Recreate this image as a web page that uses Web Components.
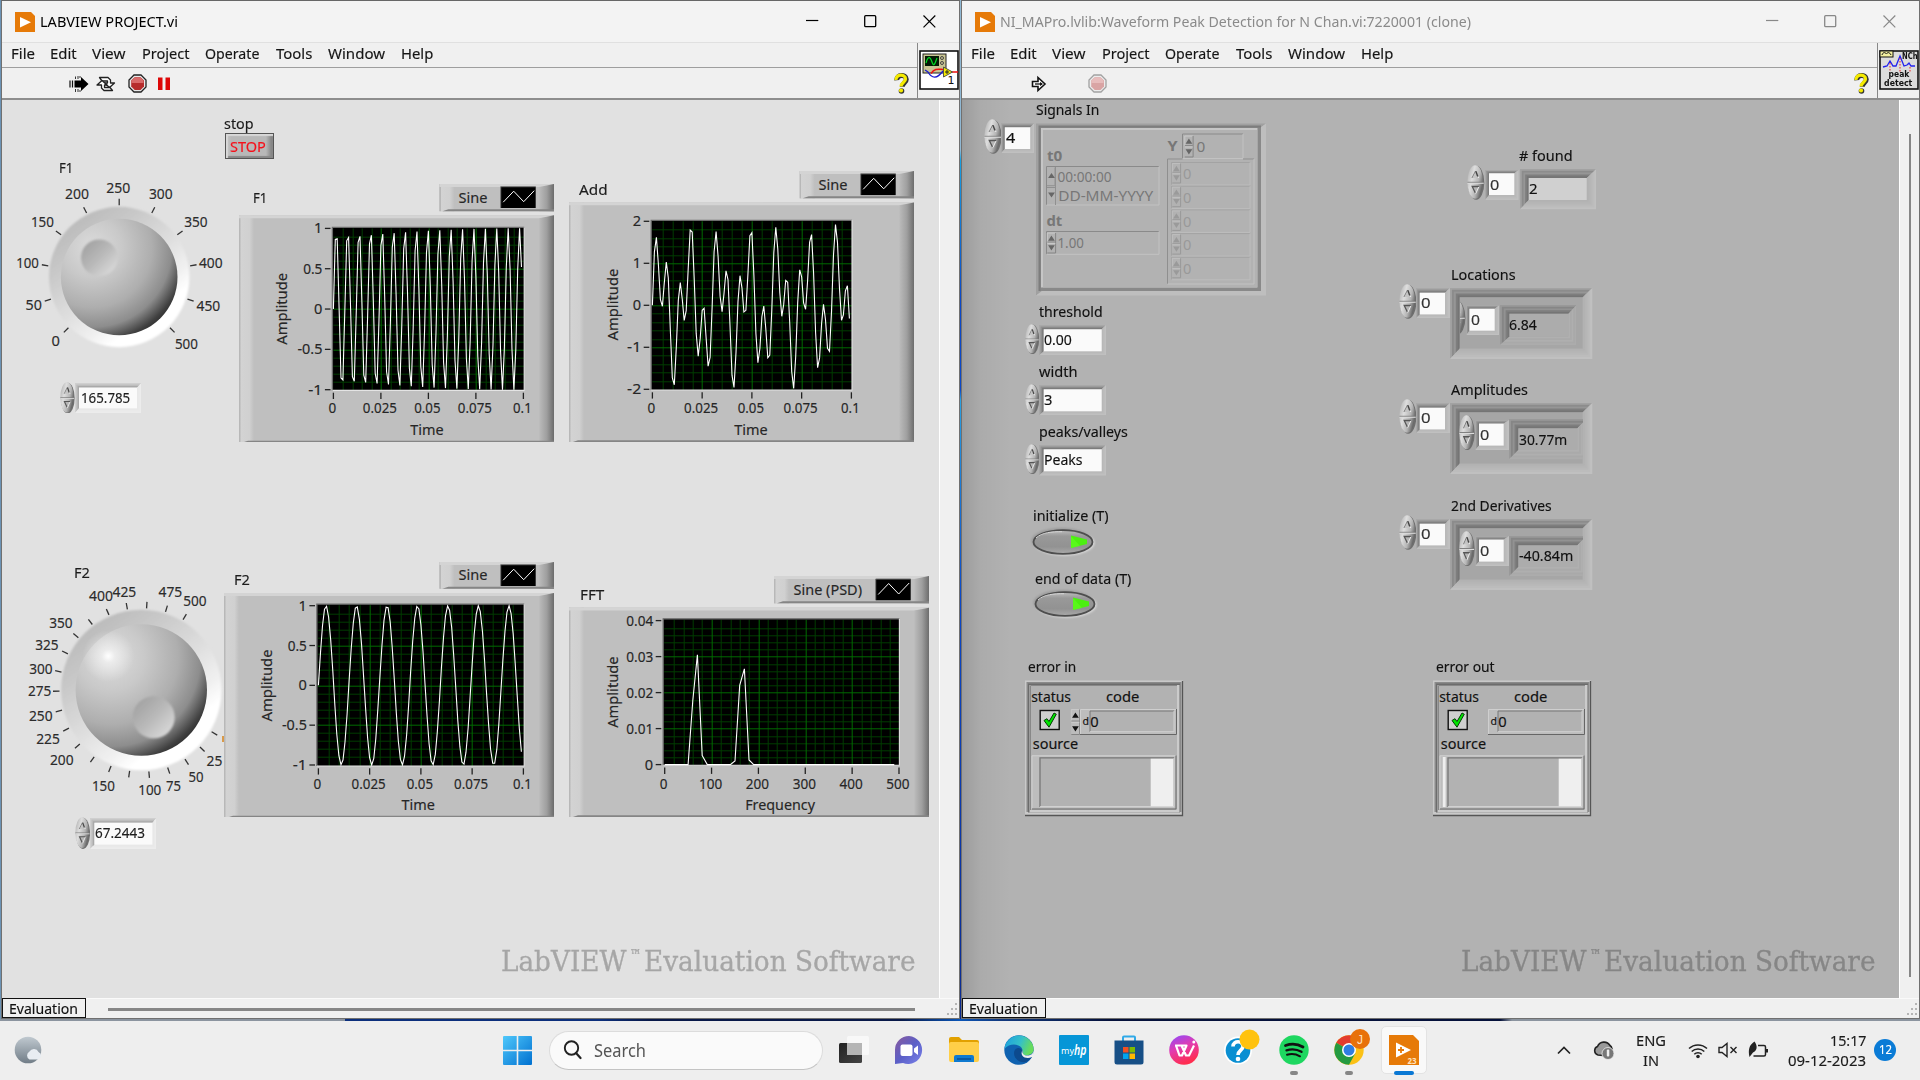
<!DOCTYPE html>
<html lang="en">
<head>
<meta charset="utf-8">
<title>LABVIEW PROJECT.vi</title>
<style>
html,body{margin:0;height:100%;overflow:hidden;background:#12307a}
body{font:15px/20px "Noto Sans","Open Sans",sans-serif;color:#111}
</style>
</head>
<body>
<lv-desktop></lv-desktop>
<script>
const def=(n,c)=>customElements.define(n,c);
class Base extends HTMLElement{
  connectedCallback(){ if(this.shadowRoot)return; this.attachShadow({mode:'open'}); this.shadowRoot.innerHTML=this.render(); this.ready&&this.ready(); }
  a(n,d){const v=this.getAttribute(n);return v===null?d:v}
  n(n){return parseFloat(this.getAttribute(n))}
}
/* Text fitted to a given advance width */
def('fit-text',class extends Base{
  render(){return `<style>:host{display:inline-block;white-space:pre;line-height:20px;height:20px;flex:none;-webkit-text-stroke:var(--tw,.15px) currentColor}span{display:inline-block;transform-origin:0 50%}</style><span><slot></slot></span>`}
  ready(){const s=this.shadowRoot.querySelector('span');const w=this.n('w');
    if(w){const o=s.getBoundingClientRect().width;if(o)s.style.transform=`scaleX(${w/o})`;this.style.width=w+'px';}}
});
const T=(s,x1,x2,b,style='')=>`<fit-text w="${(x2-x1+1.6).toFixed(1)}" style="position:absolute;left:${x1-1}px;top:${(b-16.4).toFixed(1)}px;${style}">${s}</fit-text>`;
const numW=s=>[...s].reduce((a,c)=>a+(c=='.'?3.1:c=='-'?5.8:7.75),0);
const ST=(s,x1,x2,b,extra='')=>`<text x="${x1-.8}" y="${b}" textLength="${x2-x1+1.4}" lengthAdjust="spacingAndGlyphs" ${extra}>${s}</text>`;

/* Oval increment / decrement buttons */
def('lv-spin',class extends Base{
  render(){return `<style>:host{display:block;position:absolute}svg{display:block;width:100%;height:100%}</style>
  <svg viewBox="0 0 18 35" preserveAspectRatio="none"><defs><linearGradient id="g" x1="0" x2="1" y1="0" y2=".5"><stop offset="0" stop-color="#a8a8a8"/><stop offset=".4" stop-color="#dedede"/><stop offset=".75" stop-color="#b5b5b5"/><stop offset="1" stop-color="#6a6a6a"/></linearGradient></defs>
  <ellipse cx="9.3" cy="17.7" rx="8.3" ry="17" fill="#6e6e6e"/><ellipse cx="8.4" cy="17" rx="8" ry="16.8" fill="url(#g)"/>
  <path d="M.5 17.3H17" stroke="#808080" stroke-width="1"/><path d="M.5 18.3H17" stroke="#dcdcdc" stroke-width="1"/>
  <path d="M5 13 8.7 6.5 12 13" fill="#c4c4c4" stroke="#eee"/><path d="M5 13 8.7 6" fill="none" stroke="#777"/><path d="M9 6.2 11 11.5" stroke="#444" stroke-width="1.5"/>
  <path d="M5.3 21.5H12L8.7 28.5Z" fill="#b5b5b5"/><path d="M12 21.5H5.3L8.5 28" fill="none" stroke="#555" stroke-width="1.3"/><path d="M12 22 8.9 28.5" stroke="#eee"/></svg>`}
});
const spin=(x1,y1,x2,y2)=>`<lv-spin style="left:${x1}px;top:${y1}px;width:${x2-x1}px;height:${y2-y1}px"></lv-spin>`;

/* Recessed field: outer box + inner well, mitred shading between the two */
def('lv-field',class extends Base{
  render(){
    const [x1,y1,x2,y2]=this.a('o').split(',').map(Number),[a,b,c,d]=this.a('i').split(',').map(Number);
    this.style.cssText+=`;left:${x1}px;top:${y1}px;width:${x2-x1}px;height:${y2-y1}px`;
    const cols=(this.a('shade','#a8a8a8,#909090,#7c7c7c;#c0c0c0,#bcbcbc,#b8b8b8')).split(';').map(v=>v.split(','));
    const N=cols[0].length;let s='';
    for(let k=0;k<N;k++){const f=k/N,L=x1+(a-x1)*f,Tt=y1+(b-y1)*f,R=x2-(x2-c)*f,B=y2-(y2-d)*f;
      s+=`<path d="M${L} ${B}V${Tt}H${R}L${c} ${b}L${a} ${b}L${a} ${d}Z" fill="${cols[0][k]}"/><path d="M${L} ${B}H${R}V${Tt}L${c} ${b}V${d}H${a}Z" fill="${cols[1][k]}"/>`;}
    return `<style>:host{display:block;position:absolute}svg{display:block}</style><svg width="${x2-x1}" height="${y2-y1}" viewBox="${x1} ${y1} ${x2-x1} ${y2-y1}">${s}<rect x="${a}" y="${b}" width="${c-a}" height="${d-b}" fill="${this.a('fill','#fafafa')}"/></svg>`}
});
const field=(o,i,fill,shade)=>`<lv-field o="${o}" i="${i}" ${fill?`fill="${fill}"`:''} ${shade?`shade="${shade}"`:''}></lv-field>`;
const LIGHT='#cfcfcf,#bdbdbd,#a9a9a9;#ececec,#eaeaea,#e8e8e8';
const DEEP='#a2a2a2,#8c8c8c,#969696,#7e7e7e,#757575;#c0c0c0,#bcbcbc,#b8b8b8,#b5b5b5,#b2b2b2';
const DEEP2='#999,#868686,#929292,#7e7e7e,#757575;#acacac,#a9a9a9,#afafaf,#aaa,#b0b0b0';

/* Rotary knob */
def('lv-knob',class extends Base{
  render(){
    const cx=this.n('cx'),cy=this.n('cy'),R=this.n('ro'),r=this.n('ri'),a0=this.n('a0'),cnt=this.n('ticks'),x0=this.n('x0'),x1=this.n('x1'),y0=cy-125,h=250;
    this.style.cssText+=`;left:${x0}px;top:${y0}px;width:${x1-x0}px;height:${h}px`;
    let t='';
    for(let i=0;i<=cnt;i++){const an=(a0+270*i/cnt)*Math.PI/180,s=Math.sin(an),c=-Math.cos(an);
      t+=`<path d="M${cx+s*(R+.8)} ${cy+c*(R+.8)}L${cx+s*(R+7.3)} ${cy+c*(R+7.3)}"/>`}
    const l=this.a('labels').split(';').map(v=>{const p=v.split(',');return ST(p[0],+p[1],+p[2],+p[3])}).join('');
    const [dx,dy,dr]=this.a('dimple').split(',').map(Number);
    const hl=this.hasAttribute('glow')?`<circle cx="${cx-33}" cy="${cy-34}" r="26" fill="url(#w)"/>`:'';
    return `<style>:host{display:block;position:absolute;color:#2b2b2b}svg{display:block}text{font-size:14.5px;fill:currentColor;stroke:currentColor;stroke-width:.15px}</style>
    <svg width="${x1-x0}" height="${h}" viewBox="${x0} ${y0} ${x1-x0} ${h}"><defs>
    <linearGradient id="o" x1=".2" y1=".1" x2=".8" y2=".9"><stop offset="0" stop-color="#bcbcbc"/><stop offset=".2" stop-color="#c8c8c8"/><stop offset=".5" stop-color="#dedede"/><stop offset=".72" stop-color="#f0f0f0"/><stop offset=".85" stop-color="#fff"/></linearGradient>
    <radialGradient id="k" cx=".27" cy=".25" r=".85" ><stop offset="0" stop-color="#dcdcdc"/><stop offset=".3" stop-color="#c9c9c9"/><stop offset=".6" stop-color="#aeaeae"/><stop offset=".8" stop-color="#8d8d8d"/><stop offset=".95" stop-color="#404040"/><stop offset="1" stop-color="#303030"/></radialGradient>
    <linearGradient id="d" x1=".15" y1=".15" x2=".85" y2=".85"><stop offset="0" stop-color="#a4a4a4"/><stop offset=".5" stop-color="#b9b9b9"/><stop offset="1" stop-color="#d6d6d6"/></linearGradient>
    <radialGradient id="w"><stop offset="0" stop-color="#fff"/><stop offset=".25" stop-color="#fff" stop-opacity=".5"/><stop offset="1" stop-color="#fff" stop-opacity="0"/></radialGradient>
    <filter id="b" x="-10%" y="-10%" width="120%" height="120%"><feGaussianBlur stdDeviation="1.2"/></filter></defs>
    <circle cx="${cx}" cy="${cy}" r="${R-.8}" fill="url(#o)" filter="url(#b)"/>
    <circle cx="${cx}" cy="${cy}" r="${r}" fill="url(#k)"/>${hl}
    <circle cx="${dx}" cy="${dy}" r="${dr}" fill="url(#d)" filter="url(#b)"/>
    <g stroke="#333" stroke-width="1.3">${t}</g>${l}</svg>`}
});

/* Waveform graph with plot legend */
def('lv-graph',class extends Base{
  render(){
    const c=JSON.parse(this.a('cfg'));
    const [fx,fy,fr,fb]=c.frame,[px,py,pr,pb]=c.plot,[ax,ay,ar,ab]=c.axis,[lx,ly,lr,lb]=c.legend;
    this.style.cssText+=`;left:${fx}px;top:${ly}px;width:${fr-fx}px;height:${fb-ly}px`;
    const X=v=>ax+(v-c.xr[0])/(c.xr[1]-c.xr[0])*(ar-ax),Y=v=>ab-(v-c.yr[0])/(c.yr[1]-c.yr[0])*(ab-ay);
    const box=(x,y,r,b)=>`<rect x="${x}" y="${y}" width="${r-x}" height="${b-y}" fill="#bfbfbf"/>
      <rect x="${x}" y="${y}" width="15" height="${b-y}" fill="url(#l)"/><path d="M${x} ${y}H${r}L${r-9} ${y+3}H${x}Z" fill="#d4d4d4"/>
      <path d="M${r-15} ${b}V${y+3}L${r} ${y}V${b}Z" fill="url(#r)"/><path d="M${x+3} ${b}L${x+9} ${b-2}H${r}V${b}Z" fill="#858585"/>`;
    let g='';const xm=c.xt.length-1,ym=c.yt.length-1;
    for(let i=0;i<=xm*5;i++)if(i%5){const x=Math.round(ax+(ar-ax)*i/(xm*5))+.5;g+=`<path d="M${x} ${py+1}V${pb}" stroke="#003c00"/>`}
    for(let i=0;i<=ym*5;i++)if(i%5){const y=Math.round(ay+(ab-ay)*i/(ym*5))+.5;g+=`<path d="M${px+1} ${y}H${pr}" stroke="#003c00"/>`}
    for(let i=1;i<xm;i++){const x=Math.round(ax+(ar-ax)*i/xm)+.5;g+=`<path d="M${x} ${py+1}V${pb}" stroke="#006a00"/>`}
    for(let i=1;i<ym;i++){const y=Math.round(ay+(ab-ay)*i/ym)+.5;g+=`<path d="M${px+1} ${y}H${pr}" stroke="#006a00"/>`}
    let tk='',lab='';
    c.xt.forEach((s,i)=>{const x=ax+(ar-ax)*i/xm,w=numW(s);tk+=`<path d="M${x} ${pb+2.3}v6.3"/>`;lab+=ST(s,x-w/2-.2,x+w/2-1.6,c.xb)});
    c.yt.forEach((s,i)=>{const y=ay+(ab-ay)*i/ym,w=numW(s);tk+=`<path d="M${px-7.5} ${y}h5.6"/>`;lab+=ST(s,px-10.6-w+.8,px-10.6,y+5)});
    let pts=[];
    if(c.pts)pts=c.pts; else for(let i=0;i<100;i++){const t=i/1000;let v=0;for(const f of c.f)v+=Math.sin(2*Math.PI*f*t);pts.push([t,v])}
    const d=pts.map(p=>X(p[0]).toFixed(1)+','+Y(p[1]).toFixed(1)).join(' ');
    const [ix,iy]=c.icon;
    return `<style>:host{display:block;position:absolute}svg{display:block}text{font-size:14.5px;fill:#262626;stroke:#262626;stroke-width:.15px}</style>
    <svg width="${fr-fx}" height="${fb-ly}" viewBox="${fx} ${ly} ${fr-fx} ${fb-ly}"><defs>
    <linearGradient id="l"><stop offset="0" stop-color="#b8b8b8"/><stop offset=".08" stop-color="#b8b8b8"/><stop offset=".12" stop-color="#d3d3d3"/><stop offset=".7" stop-color="#d0d0d0"/><stop offset="1" stop-color="#bfbfbf"/></linearGradient>
    <linearGradient id="r"><stop offset="0" stop-color="#bbb"/><stop offset=".5" stop-color="#9f9f9f"/><stop offset="1" stop-color="#6a6a6a"/></linearGradient>
    <clipPath id="c"><rect x="${px}" y="${py}" width="${pr-px}" height="${pb-py+.6}"/></clipPath></defs>
    ${box(fx,fy,fr,fb)}${box(lx,ly,lr,lb)}
    ${ST(c.name,c.nt[0],c.nt[1],c.nt[2])}
    <rect x="${ix}" y="${iy}" width="35" height="21.3" fill="#000"/><path d="M${ix} ${iy+21}V${iy}H${ix+35}" fill="none" stroke="#777"/><path d="M${ix+2.5} ${iy+15.5} ${ix+13} ${iy+4.5}l10 10.5 10.5-11" fill="none" stroke="#fff" stroke-width="1"/>
    <rect x="${px}" y="${py}" width="${pr-px}" height="${pb-py}" fill="#000"/><g>${g}</g>
    <path d="M${px} ${pb}V${py}H${pr}" fill="none" stroke="#6c6c6c" stroke-width="1.3"/><path d="M${px} ${pb}H${pr}V${py}" fill="none" stroke="#e4e4e4" stroke-width="1.1"/>
    <g clip-path="url(#c)"><polyline points="${d}" fill="none" stroke="#fff" stroke-width="1.1"/></g>
    <g stroke="#222" stroke-width="1.3">${tk}</g>${lab}
    ${ST(c.xn,c.xnt[0],c.xnt[1],c.xnt[2])}
    <g transform="translate(${c.an[0]} ${c.an[2]}) rotate(-90)">${ST('Amplitude',0,c.an[2]-c.an[1],0)}</g></svg>`}
});
const graph=o=>`<lv-graph cfg='${JSON.stringify(o)}'></lv-graph>`;

/* Oval boolean button */
def('lv-led',class extends Base{
  render(){return `<style>:host{display:block;position:absolute;width:66px;height:32px}svg{display:block}</style>
  <svg width="66" height="32"><defs><linearGradient id="g" x2="0" y2="1"><stop offset="0" stop-color="#bdbdbd"/><stop offset=".25" stop-color="#999"/><stop offset=".7" stop-color="#929292"/><stop offset="1" stop-color="#aaa"/></linearGradient><filter id="b" x="-20%" width="140%" y="-30%" height="160%"><feGaussianBlur stdDeviation="1.3"/></filter></defs>
  <ellipse cx="34.5" cy="17" rx="30" ry="12.5" fill="#dedede" filter="url(#b)"/><ellipse cx="31.5" cy="14.5" rx="30" ry="12.5" fill="#999" filter="url(#b)"/>
  <ellipse cx="33" cy="16" rx="29.5" ry="11.8" fill="url(#g)" stroke="#4e4e4e" stroke-width="1.8"/><path d="M6 12C12 6.500 22 5.500 32 5.700" fill="none" stroke="#d8d8d8" stroke-width="1"/>
  <path d="M41 9.500 57 13.500V18L41 22Z" fill="#4cf010"/><path d="M41 10v12L50 20Z" fill="#62ff22" opacity=".6"/></svg>`}
});

/* Classic flat up/down arrows */
const arrows=(x,y,h,col)=>`<g transform="translate(${x} ${y})"><path d="M0 ${h/2-.5}V0H8" stroke="#c9c9c9" fill="none"/><path d="M8.3 0V${h}H0" stroke="#858585" fill="none"/><path d="M0 ${h/2-1}H8" stroke="#8a8a8a"/><path d="M0 ${h/2+.5}H8" stroke="#c9c9c9"/><path d="M4.100 ${h*.12}L7.500 ${h*.12+5.300}H.8ZM4.100 ${h*.88}L7.500 ${h*.88-5.300}H.8Z" fill="${col}"/></g>`;
const sunk=(x1,y1,x2,y2,d='#8a8a8a',l='#c2c2c2')=>`<path d="M${x1} ${y2}V${y1}H${x2}" fill="none" stroke="${d}"/><path d="M${x1} ${y2}H${x2}V${y1}" fill="none" stroke="${l}"/>`;

/* Disabled waveform cluster */
def('lv-waveform',class extends Base{
  render(){let rows='';
    for(let i=0;i<5;i++){const y=162.5+i*23.7;rows+=sunk(211.5,y,290,y+22.5,'#a3a3a3','#bdbdbd')+`<g opacity=".55">${arrows(212.300,y+1,19.500,'#888')}</g>`}
    let z='';for(let i=0;i<5;i++)z+=ST('0',223.7,230.7,179.3+i*23.7,'style="fill:#999"');
    return `<style>:host{display:block;position:absolute;left:76px;top:123px;width:230px;height:173px}svg{display:block}text{font-size:14.5px;fill:#777}.b{font-weight:700}</style>
    <svg width="230" height="173" viewBox="76 123 230 173">
    <path d="M76 295.500V123.500H306Z" fill="#a0a0a0"/><path d="M76 295.500H306V123.500Z" fill="#bebebe"/>
    <rect x="78.500" y="125.500" width="222.500" height="165.500" fill="#7d7d7d"/><rect x="80.500" y="127.500" width="220.500" height="163.500" fill="#898989"/>
    <rect x="81" y="128" width="216.500" height="159.500" fill="#c6c6c6"/><rect x="83" y="130" width="214" height="157.500" fill="#b2b2b2"/>
    ${sunk(86.5,166.5,199,205)}<path d="M95.500 167v38M95 167.500v18M87 185.700H95.500M87 187.500h8" stroke="#909090"/><path d="M91.500 173l3.400 5h-6.800zM91.500 197.500l3.400-5h-6.800z" fill="#666"/>
    ${sunk(86.5,231.5,199,254.3)}${arrows(87.300,233,20,'#666')}
    ${sunk(222.5,134,283,158.5)}${arrows(224.800,136,21,'#666')}
    <path d="M207.500 284V159H222.500M283 159H294" fill="none" stroke="#8f8f8f"/><path d="M207.500 284H294V159" fill="none" stroke="#c2c2c2"/>${rows}
    ${ST('t0',87.7,101.7,161,'class="b"')}${ST('00:00:00',98.3,151,182)}${ST('DD-MM-YYYY',99,192.7,201)}${ST('dt',87.3,101.7,226.3,'class="b"')}${ST('1.00',98.3,123.3,248.3)}${ST('Y',208.3,217,151,'class="b"')}${ST('0',237.3,244.7,152.3)}${z}</svg>`}
});

/* Error cluster */
def('lv-error',class extends Base{
  render(){const inn=this.hasAttribute('in');
    return `<style>:host{display:block;position:absolute;top:680px;width:160px;height:137px}svg{display:block}text{font-size:14.5px;fill:#111;stroke:#111;stroke-width:.15px}</style>
    <svg width="160" height="137" viewBox="65 680 160 137"><rect x="65" y="680.500" width="158" height="135.500" fill="#c9c9c9"/><path d="M65 815.500H222.500V681" fill="none" stroke="#555" stroke-width="1.3"/>
    <rect x="66.500" y="682" width="155" height="130" fill="#8a8a8a"/><rect x="68" y="683.500" width="152" height="129" fill="#6c6c6c"/><rect x="69.500" y="685" width="150" height="127.500" fill="#cbcbcb"/><rect x="70.500" y="686" width="146.500" height="124" fill="#b2b2b2"/><path d="M70.500 810V685.500H217" fill="none" stroke="#888"/>
    <rect x="80.200" y="710.500" width="19" height="19" fill="#cfcfcf" stroke="#111" stroke-width="1.4"/><path d="M84 720.500l3-1.800 2 2.800 5-8.500 2.300 1.200-7.300 13z" fill="#00e400" stroke="#063c06"/>
    ${inn?`<rect x="111.200" y="709" width="8.500" height="26" fill="#bcbcbc"/>`+arrows(111.300,709.500,25,'#111'):''}
    <rect x="120.300" y="709" width="96.500" height="26" fill="#bdbdbd"/><path d="M120.500 735V709.500H217" fill="none" stroke="#cfcfcf"/><path d="M120 734.500H216.500V709" fill="none" stroke="#666"/>
    <rect x="130" y="711" width="84" height="21" fill="#b2b2b2"/>${sunk(130,711,214,731.7,'#777','#d0d0d0')}
    <rect x="71.600" y="755.300" width="144.400" height="54" fill="#bdbdbd"/><path d="M72 809V755.800H216" fill="none" stroke="#d0d0d0"/><path d="M72 809H216V755.500" fill="none" stroke="#686868"/>
    <rect x="79.500" y="757.300" width="135" height="49.500" fill="#b2b2b2"/><path d="M80 807V757.800H214" fill="none" stroke="#777" stroke-width="1.3"/><path d="M80 806.700H214V758" fill="none" stroke="#d8d8d8"/><rect x="190.700" y="758.700" width="22.500" height="47.500" fill="#efefef"/>
    ${inn?'':'<rect x="74.800" y="757" width="2.800" height="50" fill="#eee"/>'}
    ${ST('status',72,110.4,702.3)}${ST('code',146.8,178.8,702.3)}${ST('source',73.6,117.5,748.7)}${ST('d',123.4,128.500,724.5,'style="font-size:11px"')}${ST('0',131,138,726.7)}</svg>`}
});

/* Array index + nested element box */
def('lv-array',class extends Base{
  render(){const loc=this.hasAttribute('loc'),v=this.a('v'),v2=+this.a('vx');
    const inner=loc?`<div class="clip"><div class="org">${spin(487.500,300,505.300,335)}</div></div>`+field('505.3,304.3,539,335','508.7,308,534,330')+T('0',511.3,518.7,324.7,'color:#333')+field('539.3,304.3,616,344.3','548.7,313,607.7,336','#acacac',DEEP2)+T(v,549.7,v2,329.7)
      :spin(499,299.300,515,334.700)+field('515,304.7,549,335','519,308.3,543.7,330.3')+T('0',521,528.7,324.7,'color:#333')+`<div class="clip"><div class="org">${field('549,304,626.500,344.3','558.3,313.3,617.3,335','#acacac',DEEP2)}</div></div>`+T(v,560,v2,330);
    return `<style>:host{display:block;position:absolute;left:0;width:960px;height:0}.clip{position:absolute;left:500px;top:297px;width:122.500px;height:51px;overflow:hidden}.org{position:absolute;left:-500px;top:-297px}</style>
    ${T(this.a('name'),491.7,+this.a('nx'),280)}${spin(438.3,283.3,456,318.3)}${field('456,287.3,490,317.7','459.7,292,485,313.7')}${T('0',462,470,308,'color:#333')}
    ${field('490,287.7,632.3,358.7','499.7,297,622.7,348.3','#a6a6a6',DEEP)}${inner}`}
});

/* Toolbar glyphs */
def('lv-toolbar',class extends Base{
  render(){const idle=this.hasAttribute('idle');
    const svg=(w,h,b,ml=0,o=1)=>`<svg width="${w}" height="${h}" viewBox="0 0 ${w} ${h}" style="margin-left:${ml}px;opacity:${o}">${b}</svg>`;
    const stop=`<path d="M6 1H13L18 6V13L13 18H6L1 13V6Z" fill="#e8e8e8" stroke="#222" stroke-width="1.300"/><path d="M6.700 3.200H12.500L16 6.500V12.500L12.500 16H6.700L3.200 12.500V6.500Z" fill="#b62c2c"/><path d="M6.700 3.500H12.500L15.500 6.500V9H3.500V6.500Z" fill="#d96a6a"/>`;
    return `<style>:host{display:flex;align-items:center;height:32px;flex:none}svg{flex:none;display:block}.sp{flex:1}</style>
    ${idle?svg(16,18,'<path d="M1.500 6.500H7V2.500L14 9L7 15.500V11.500H1.500Z" fill="#fff" stroke="#111" stroke-width="1.600"/><path d="M4 9H11" stroke="#111" stroke-width="1.300"/><path d="M9 7v4l3-2z" fill="#111"/>',69):
      svg(20,18,'<path d="M5.500 5.500H12V2L19.500 9L12 16V12.500H5.500Z"/><path d="M1 5.500v7M3.500 5.500v7" stroke="#111" stroke-width="1.200"/><path d="M6.500 1.500v2.500M9 1v3M6.500 14v3M9 14v3M11 1v2M11 15v2" stroke="#333" stroke-width="1"/>',67)+
      svg(22,18,'<g fill="#fff" stroke="#222" stroke-width="1.300" stroke-linejoin="round"><path d="M4.500 2.500H13L15.500 5V8H19.500L14.500 12.500L9.500 8H12.500V6H7Z"/><path d="M17.500 15.500H9L6.500 13V10H2L7 5.500L12 10H9.500V12.500H15Z"/></g>',6)}
    ${svg(19,19,stop,idle?41.200:10.700,idle?.38:1)}
    ${idle?'':svg(12,14,'<path d="M0 .500h4.500v12.500H0zM7.500 .500H12v12.500H7.500z" fill="#dd0808"/>',11)}
    <span class="sp"></span>${svg(16,21,'<path d="M3 7C2.500 1 12.500 .500 12.500 6C12.500 9.500 8.500 9.500 8.500 13.500" fill="none" stroke="#333" stroke-width="5" transform="translate(.8 .3)"/><circle cx="8.500" cy="18" r="2.800" fill="#333"/><path d="M3 7C2.500 1 12.500 .500 12.500 6C12.500 9.500 8 9.500 8 13.500" fill="none" stroke="#f4ea00" stroke-width="3.300"/><circle cx="8" cy="17.500" r="2.100" fill="#f4ea00"/>')}<span style="width:8px"></span>`}
});

/* VI connector icons, 40 x 40 */
const viIcon1=`<rect x="1" y="1" width="38" height="38" fill="#fff" stroke="#111" stroke-width="1.600"/><rect x="4" y="4" width="23" height="19" fill="#c9c593" stroke="#222"/><rect x="6" y="6" width="14" height="10" fill="#041a04"/><path d="M7 13c2-7 4-7 6-1s3 1 5-4" fill="none" stroke="#0d2" stroke-width="1.200"/><circle cx="23" cy="8" r="1.500" fill="none" stroke="#444"/><circle cx="23" cy="13" r="1.500" fill="none" stroke="#444"/><path d="M6 20l3 2c4 7 9 7 15-1" fill="none" stroke="#1a1ad0" stroke-width="1.300"/><path d="M12 23.500c4-6 8-4 13-4M33 22h6" fill="none" stroke="#e11" stroke-width="1.500"/><path d="M24.500 17v10l9-5z" fill="#f4ea00" stroke="#554"/><path d="M26 22h4M28 20v4" stroke="#222"/>`;
const viIcon2=`<rect x="1" y="1" width="38" height="38" fill="#dcdcdc" stroke="#111" stroke-width="1.600"/><rect x="1" y="1" width="13" height="6" fill="#f3f0a0" stroke="#111"/><path d="M3 5c1-3 3-3 4.500-1 1-2 3-2 4.500 1" fill="none" stroke="#111"/><path d="M4 17l4-1 3-5 3 5h3l4-10 4 10 3-1 2-2 2 3h4" fill="none" stroke="#22e" stroke-width="1.300"/><path d="M11 13v9M21 8v14M31 17v5" stroke="#e22" stroke-dasharray="1.500 1.500"/>`;

/* A LabVIEW window */
def('lv-window',class extends Base{
  render(){const idle=this.hasAttribute('idle');const c=idle?'#888':'#000';
    const menu=[['File',11.3,33.3],['Edit',51,75.7],['View',93.3,124.7],['Project',142.7,188.3],['Operate',206.3,258.7],['Tools',276.7,311],['Window',329,384],['Help',401.7,432]];
    let cur=1.8,m='';for(const[s,a,b]of menu){m+=`<fit-text w="${(b-a+2).toFixed(1)}" style="margin-left:${(a-1-cur).toFixed(1)}px">${s}</fit-text>`;cur=b+1}
    return `<style>
    :host{display:flex;flex-direction:column;box-sizing:border-box;width:959px;height:1018.500px;border:1px solid #707070;border-top-color:#666;background:#f0f0f0;overflow:hidden;flex:none}
    .title{height:41px;flex:none;display:flex;align-items:center;background:#f3f3f3;border-bottom:1px solid #e0e0e0;color:${idle?'#8a8a8a':'#000'};--tw:0}
    .title>svg{flex:none;display:block}.sp{flex:1}
    .mid{display:flex;height:57px;flex:none;border-bottom:2px solid #8e8e8e;box-sizing:border-box}
    .l{flex:1;display:flex;flex-direction:column}.menu{height:23.500px;flex:none;display:flex;align-items:center;border-bottom:1px solid #9e9e9e;color:#151515}
    .menu fit-text{margin-top:-4.500px;font-size:14.500px}.icon{width:42px;border-left:1px solid #888;position:relative;display:flex;align-items:center;justify-content:center;box-sizing:border-box}
    .icon .g{position:relative;width:40px;height:40px;margin-top:-2px}.icon svg{display:block}
    .icon span{position:absolute;font:700 9.500px/10px "DejaVu Sans",sans-serif;text-align:center}
    .body{flex:1;display:flex;min-height:0}.panel{flex:1;position:relative;overflow:hidden;background:var(--panel)}
    .org{position:absolute;left:-1.600px;top:-99.800px;width:960px;height:1080px}
    .vs{width:20px;border-left:1px solid #fff;flex:none;display:flex;justify-content:center;box-sizing:border-box}
    .vs i{width:2px;margin-top:34px;margin-bottom:21px;background:#868686}
    .foot{height:19px;flex:none;display:flex;align-items:center;border-top:1px solid #fafafa}
    .tab{box-sizing:border-box;width:84px;height:20px;border:1.500px solid #111;padding-left:6px;color:#111;font-size:14.500px;line-height:18px;flex:none}
    .tab fit-text{margin-top:-1px}.hs{width:807px;height:2.300px;background:#868686;margin:3px 0 0 21.500px}</style>
    <div class="title"><svg width="20" height="20" style="margin-left:13px"><path d="M0 0H16L20 4V20H0Z" fill="#e67a08"/><path d="M5 5L16 10.300L5 15.500Z" fill="#fff"/></svg>
    <fit-text w="${this.a('tw')}" style="margin-left:4.500px;margin-top:-1px;font-size:15px">${this.a('name')}</fit-text><span class="sp"></span>
    <svg width="13" height="13"><path d="M0 5.500H12.300" stroke="${c}" stroke-width="1.200"/></svg><svg width="13" height="13" style="margin-left:45.300px"><rect x=".7" y=".7" width="11" height="11" rx="1" fill="none" stroke="${c}" stroke-width="1.300"/></svg><svg width="13" height="13" style="margin:0 23.500px 0 45.700px"><path d="M.5 .5L12.300 12.300M12.300 .5L.5 12.300" stroke="${c}" stroke-width="1.200"/></svg></div>
    <div class="mid"><div class="l"><div class="menu">${m}</div><lv-toolbar ${idle?'idle':''}></lv-toolbar></div><div class="icon"><div class="g"><svg width="40" height="40">${idle?viIcon2:viIcon1}</svg>${idle?'<span style="left:23px;top:1px;font-size:8.500px;transform:scaleX(.8);transform-origin:0 0">NCh</span><span style="left:7px;top:19px;transform:scaleX(.8)">peak</span><span style="left:2px;top:28.500px;transform:scaleX(.82)">detect</span>':'<span style="right:4px;top:26px;font-weight:400;font-size:11px">1</span>'}</div></div></div>
    <div class="body"><div class="panel"><div class="org"><slot></slot></div></div><div class="vs">${idle?'<i></i>':''}</div></div>
    <div class="foot"><div class="tab"><fit-text w="69">Evaluation</fit-text></div>${idle?'':'<div class="hs"></div>'}<span class="sp"></span><svg width="13" height="16"><g fill="#b5b5b5"><path d="M9 3h2v2H9zM9 8h2v2H9zM9 13h2v2H9zM5 8h2v2H5zM5 13h2v2H5zM1 13h2v2H1z"/></g></svg></div>`}
});

const wm=c=>{const st=`font:27.500px/20px 'DejaVu Serif Condensed','DejaVu Serif',serif;color:${c};--tw:.3px`;
  return `<fit-text w="125.500" style="position:absolute;left:500.500px;top:950.600px;${st}">LabVIEW</fit-text><fit-text w="11" style="position:absolute;left:629.500px;top:945px;${st};font-size:15px">™</fit-text><fit-text w="271.500" style="position:absolute;left:643.500px;top:950.600px;${st}">Evaluation Software</fit-text>`};

def('project-panel',class extends Base{
  render(){
    const xt=['0','0.025','0.05','0.075','0.1'],h=['1','0.5','0','-0.5','-1'];
    return `<style>:host{display:block;font-size:14.500px;color:#1c1c1c}.stop{position:absolute;left:224.300px;top:133px;width:49px;height:25.500px;box-sizing:border-box;border:1.500px solid #555;background:linear-gradient(90deg,#c4c4c4 0,#b8b8b8 12%,#b8b8b8 85%,#777 100%);box-shadow:inset 2px 2px 1px #d8d8d8,inset -2px -2px 1px #888}</style>
    ${T('stop',225,253,128.7)}<div class="stop"></div>${T('STOP',231,265.3,152,'color:#f5101a')}
    ${T('F1',60,72.7,173.6)}
    <lv-knob cx="119.200" cy="277" ro="71" ri="58.300" a0="225" ticks="10" x0="10" x1="235" dimple="99.3,257.7,18.3" labels="200,65.7,88.3,199.3;250,107,129.7,193;300,149.7,172,199.3;150,31.7,53.3,227;350,185,207,227;100,17,38.3,268;400,199.7,222,268;50,26.3,41.3,309.7;450,197.3,219.7,311;0,52.3,59.3,345.7;500,175.7,197.3,349.3"></lv-knob>
    ${spin(59.7,381.3,74.7,413)}${field('74.3,382.7,140.7,412.7','78.3,387.3,136.3,408','',LIGHT)}${T('165.785',81.7,129.3,403)}
    ${T('F2',75,89.3,578.3)}
    <lv-knob glow cx="141.300" cy="690" ro="81" ri="65.700" a0="120.700" ticks="20" x0="10" x1="235" dimple="153.7,717.3,21" labels="400,89.7,112.3,601;425,113.3,135.7,596.7;475,159.3,181.7,597.3;500,184,206,606;350,50,72,628.3;325,36,58,650;300,30,52,674;275,28.7,50.7,696;250,29.7,52,721;225,37,59.3,743.7;200,50.7,73,765;150,92.7,114.3,791.3;100,139,160.7,795;75,166.7,180.3,791.3;50,189.3,203,782.3;25,207.3,221.7,766"></lv-knob>
    <div style="position:absolute;left:222px;top:736px;width:1.500px;height:6px;background:#d99a4a"></div>
    ${spin(74.3,816.3,89.7,848.5)}${field('89.3,817.3,155.7,848.3','93.7,822,151.7,844','',LIGHT)}${T('67.2443',96,144.3,838.3)}
    ${T('F1',254,266.7,203)}${T('Add',580,607,194.7)}${T('F2',235,249.3,584.7)}${T('FFT',580.3,603,599.7)}
    ${graph({frame:[238.3,214.5,553.5,442],plot:[331.7,226.7,523.5,389.7],axis:[332.7,227.7,522.7,389],legend:[438.7,183.3,553.5,210.5],xr:[0,.1],yr:[-1,1],xt,yt:h,xb:412.7,f:[165.785],name:'Sine',nt:[458.7,486.3,202],icon:[500,186],xn:'Time',xnt:[410.3,442.3,434.7],an:[286.7,272.7,343.3]})}
    ${graph({frame:[568.3,202,913.7,442],plot:[650.5,220,851.3,389.7],axis:[651.7,221,850.7,389],legend:[799,170.7,913.7,198],xr:[0,.1],yr:[-2,2],xt,yt:['2','1','0','-1','-2'],xb:412.7,f:[165.785,67.2443],name:'Sine',nt:[818.7,846.3,189.7],icon:[860,173.5],xn:'Time',xnt:[734.3,766.3,434.7],an:[617,269,339.3]})}
    ${graph({frame:[223.3,592.3,553.5,817],plot:[316.2,603.5,523.5,765.3],axis:[317.7,605,522.7,764.3],legend:[438.7,561.3,553.5,588],xr:[0,.1],yr:[-1,1],xt,yt:h,xb:788.3,f:[67.2443],name:'Sine',nt:[458.7,486.3,579.7],icon:[500,564],xn:'Time',xnt:[401.7,433.7,809.7],an:[271.7,649.3,720]})}
    ${graph({frame:[568.3,607.3,928.7,817],plot:[662.5,618.5,898.7,765],axis:[664,620.3,898.3,764.3],legend:[773.3,575.7,928.7,603],xr:[0,500],yr:[0,.04],xt:['0','100','200','300','400','500'],yt:['0.04','0.03','0.02','0.01','0'],xb:788.3,pts:[[0,0],[50,0],[60,.0178],[69.7,.0305],[80,.0025],[91,0],[140,0],[150,.001],[160,.022],[170,.0266],[180,.0013],[190,0],[490,0]],name:'Sine (PSD)',nt:[793.7,860.7,594.7],icon:[875,578.7],xn:'Frequency',xnt:[745.3,813.7,810],an:[617.7,656.7,726.7]})}
    ${wm('#a6a6a6')}`}
});

def('peak-panel',class extends Base{
  render(){
    const ctl=(dy,name,nx,v,vx)=>T(name,79.7,nx,317.3+dy)+spin(65,323.3+dy,79.5,353.7+dy)+field(`78.3,${324.7+dy},145.3,${355.3+dy}`,`83,${329+dy},141,${351+dy}`)+T(v,84.7,vx,345.3+dy);
    return `<style>:host{display:block;font-size:14.500px;color:#111}.sh{position:absolute;left:1px;top:99px;width:50px;height:900px;background:linear-gradient(90deg,rgba(0,0,0,.13),rgba(0,0,0,.04) 40%,transparent)}</style><div class="sh"></div>
    ${T('Signals In',76.3,138,114.7)}${spin(23.2,118.3,41.2,153.3)}${field('40.5,122.7,74,153','44.3,127,69.7,148.7')}${T('4',47,54.7,143)}
    <lv-waveform></lv-waveform>
    ${ctl(0,'threshold',141.7,'0.00',111)}${ctl(60,'width',116.7,'3',91.5)}${ctl(120.3,'peaks/valleys',167,'Peaks',121.7)}
    ${T('initialize (T)',73.7,147.7,521.3)}<lv-led style="left:70px;top:525.500px"></lv-led>
    ${T('end of data (T)',75.3,170,583.7)}<lv-led style="left:71.300px;top:588px"></lv-led>
    ${T('# found',560,612,160.7)}${spin(507,164.7,524.7,199.7)}${field('524.7,169.7,558.3,200','528.7,173,554,194.7')}${T('0',531,538.7,189.7,'color:#333')}
    ${field('559.3,169,635.7,209.3','568,178,626,200','#d0d0d0',DEEP)}${T('2',570,577,194.3)}
    <lv-array loc name="Locations" nx="554.7" v="6.84" vx="576" style="top:0"></lv-array>
    <lv-array name="Amplitudes" nx="567" v="30.77m" vx="606.700" style="top:115px"></lv-array>
    <lv-array name="2nd Derivatives" nx="590.700" v="-40.84m" vx="612.700" style="top:231.300px"></lv-array>
    ${T('error in',68.9,115.5,672.3)}<lv-error in style="left:65px"></lv-error>
    ${T('error out',476.5,533.5,672.3)}<lv-error style="left:472.700px"></lv-error>
    ${wm('#868686')}`}
});

/* Windows taskbar */
def('task-bar',class extends Base{
  render(){
    const I=(b,run='')=>`<div class="c ${run}"><svg width="30" height="30" viewBox="0 0 30 30" overflow="visible">${b}</svg></div>`;
    return `<style>:host{display:flex;align-items:center;height:59.500px;background:#eee;box-sizing:border-box;color:#1b1b1b;flex:none}
    svg{display:block;flex:none}.c{width:55.050px;height:59px;display:flex;flex-direction:column;align-items:center;justify-content:center;position:relative;flex:none}
    .dot::after{content:"";position:absolute;bottom:5px;width:8px;height:4px;border-radius:2px;background:#868686}
    .on::before{content:"";position:absolute;left:4px;top:5px;width:46px;height:48px;background:#f9f9f9;border:1px solid #e3e3e3;border-radius:5px;box-sizing:border-box}
    .on svg{position:relative}.on::after{content:"";position:absolute;bottom:5px;width:20px;height:4px;border-radius:2px;background:#0a78d4}
    .search{width:274px;height:39px;box-sizing:border-box;border:1px solid #dcdcdc;border-bottom-color:#c4c4c4;border-radius:20px;background:#fafafa;display:flex;align-items:center;margin-left:16.500px;color:#555;flex:none}
    .col{display:flex;flex-direction:column;align-items:center;font-size:14.500px}.col.e{align-items:flex-end}.sp{flex:1}
    .n{width:22px;height:22px;border-radius:50%;background:#0a7bd6;color:#fff;display:flex;align-items:center;justify-content:center;font-size:12px;margin:0 24px 0 8px}</style>
    <svg width="30" height="28" style="margin-left:14px"><defs><linearGradient id="m" x2="0" y2="1"><stop offset="0" stop-color="#c0c9d0"/><stop offset="1" stop-color="#717d87"/></linearGradient></defs><circle cx="14" cy="14" r="13.300" fill="url(#m)"/><path d="M15.500 23.500a4.500 4.500 0 010-8 5 5 0 0 1 9 .5 4 4 0 0 1 0 7.500z" fill="#e8edf2"/></svg>
    <svg width="29" height="29" style="margin-left:459px"><defs><linearGradient id="wn" x2="1" y2="1"><stop offset="0" stop-color="#4fc8fb"/><stop offset="1" stop-color="#0070d0"/></linearGradient></defs><path d="M0 1q0-1 1-1H13.700V13.700H0ZM15.300 0H28q1 0 1 1V13.700H15.300ZM0 15.300H13.700V29H1q-1 0-1-1ZM15.300 15.300H29V28q0 1-1 1H15.300Z" fill="url(#wn)"/></svg>
    <div class="search"><svg width="19" height="20" style="margin-left:13px"><circle cx="8.500" cy="8" r="6.700" fill="none" stroke="#222" stroke-width="1.900"/><path d="M13 13l4.500 5" stroke="#222" stroke-width="2.200" stroke-linecap="round"/></svg><fit-text w="52" style="margin-left:12px;font-size:17.500px;--tw:0">Search</fit-text></div>
    <div style="width:4px;flex:none"></div>
    ${I('<defs><linearGradient id="tv" x2="1" y2="1"><stop offset="0" stop-color="#222"/><stop offset="1" stop-color="#444"/></linearGradient></defs><rect x="0" y="8" width="23" height="20" rx="1.500" fill="url(#tv)"/><rect x="8" y="1" width="22" height="19" rx="1.500" fill="#f8f8f8"/><path d="M8 8H23V20H8Z" fill="#b5b5b5"/>')}
    ${I('<defs><linearGradient id="ch" x2="1" y2="1"><stop offset="0" stop-color="#8a5a9c"/><stop offset=".5" stop-color="#5b5fc7"/><stop offset="1" stop-color="#7b83eb"/></linearGradient></defs><path d="M15 1A14 14 0 1 1 9 28L1 29V15A14 14 0 0 1 15 1Z" fill="url(#ch)"/><rect x="6.500" y="9.500" width="12" height="11.500" rx="2" fill="#fff"/><path d="M20 13.500l4-3v9.500l-4-3z" fill="#fff"/>')}
    ${I('<path d="M0 4q0-2 2-2H10l3 3H28q2 0 2 2V12H0Z" fill="#e2a100"/><rect x="0" y="7" width="30" height="20" rx="2" fill="#ffcf48"/><path d="M5 27V22q0-2 2-2H23q2 0 2 2V27Z" fill="#0f7ad0"/><path d="M8 24H22" stroke="#084f94" stroke-width="1.500"/>')}
    ${I('<defs><linearGradient id="e1" x2="1" y2=".3"><stop offset="0" stop-color="#1a9de0"/><stop offset=".6" stop-color="#35c0c8"/><stop offset="1" stop-color="#68dc5c"/></linearGradient></defs><circle cx="15" cy="15" r="14.700" fill="#0f62b0"/><path d="M.4 14A14.700 14.700 0 0 1 29.700 14C29.700 19 25 21 20 20 17 19 19 17.500 18.500 15 17.500 9 6 7 .4 14Z" fill="url(#e1)"/><path d="M19 17C17 11 10 12 10 18 10 25 17 28 22 27 25 25.500 27 23.500 28 21.500 24 23.500 17 22 19 17Z" fill="#0c4a8e"/><path d="M18.500 15C18 19 20 20.500 23 20.500 27 20.500 28.500 19 29.700 16V22H28C22 25 15 21 18.500 15Z" fill="#eee"/>')}
    ${I('<rect width="30" height="30" rx="1" fill="#0696d7"/><text x="2" y="18.500" font-size="9" fill="#fff" textLength="13" lengthAdjust="spacingAndGlyphs">my</text><text x="15" y="20" font-size="15" font-weight="600" font-style="italic" fill="#fff" textLength="12.500" lengthAdjust="spacingAndGlyphs">hp</text>')}
    ${I('<path d="M9 7V2.500q0-1 1-1H20q1 0 1 1V7" fill="none" stroke="#2fa9e8" stroke-width="2"/><path d="M.5 5.500H29.500V27q0 2.500-2.500 2.500H3Q.5 29.500.5 27Z" fill="#174f86"/><path d="M9 12h5.500v5.500H9z" fill="#f25022"/><path d="M15.500 12H21v5.500h-5.500z" fill="#7fba00"/><path d="M9 18.500h5.500V24H9z" fill="#00a4ef"/><path d="M15.500 18.500H21V24h-5.500z" fill="#ffb900"/>')}
    ${I('<defs><linearGradient id="wp" x2=".4" y2="1"><stop offset="0" stop-color="#8a4bff"/><stop offset=".5" stop-color="#e23bb0"/><stop offset="1" stop-color="#ff2d50"/></linearGradient></defs><circle cx="15" cy="15" r="14.800" fill="url(#wp)"/><path d="M6 10.500H17.500L13 20.500H10.500L7 10.500M12.500 10.500L17 20.500H20L25 10.500" fill="none" stroke="#fff" stroke-width="2.200" stroke-linejoin="round"/><circle cx="24.800" cy="7" r="1.500" fill="#fff"/>')}
    ${I('<circle cx="14" cy="15.500" r="14" fill="#fff"/><circle cx="14" cy="15.500" r="12.300" fill="#0a8fd2"/><path d="M9 11.500C9 5 19.500 5.500 19 11.500C18.700 15.500 14 15.500 14 20" fill="none" stroke="#fff" stroke-width="3.600"/><circle cx="14" cy="24" r="2.300" fill="#fff"/><circle cx="25.500" cy="4.500" r="10" fill="#ffc20e"/>')}
    ${I('<circle cx="15" cy="15" r="14.700" fill="#1ed760"/><g fill="none" stroke="#111" stroke-linecap="round"><path d="M6.500 10.500C12 8.500 19 9 24 12" stroke-width="2.800"/><path d="M7.500 15.300C12.500 13.700 18 14.200 22.500 16.800" stroke-width="2.300"/><path d="M8 19.800C12.500 18.500 17 19 21 21.300" stroke-width="2"/></g>','dot')}
    ${I('<circle cx="15" cy="15" r="14.700" fill="#fbc116"/><path d="M15 15L2.270 7.650A14.700 14.700 0 0 1 27.730 7.650Z" fill="#e33b2e"/><path d="M15 15L2.270 7.650A14.700 14.700 0 0 0 15 29.700L21.500 18Z" fill="#249a41"/><circle cx="15" cy="15" r="7" fill="#fff"/><circle cx="15" cy="15" r="5.500" fill="#2f7de1"/><circle cx="26" cy="4" r="10" fill="#e8710a"/><text x="23" y="8.500" font-size="12" font-family="Liberation Sans,sans-serif" fill="#ffe0c0">J</text>','dot')}
    ${I('<path d="M0 0H24L30 6V30H0Z" fill="#e67a08"/><path d="M7 7.500L22 15L7 22.500Z" fill="#fff"/><path d="M9 15h6M12 12v6" stroke="#e67a08" stroke-width="1.800"/><text x="18.500" y="28.500" font-size="8" font-weight="700" fill="#ffe2bd">23</text>','on')}
    <span class="sp"></span>
    <svg width="14" height="9"><path d="M1 7.500L7 1.500L13 7.500" fill="none" stroke="#222" stroke-width="1.700"/></svg>
    <svg width="22" height="20" style="margin-left:22px;margin-top:2px"><path d="M5 14a4.500 4.500 0 0 1-.5-8.500A7 7 0 0 1 17 4.500 4.500 4.500 0 0 1 18 11L10 14.500Z" fill="#999" stroke="#222" stroke-width="1.600"/><circle cx="15" cy="12.500" r="6" fill="#777" stroke="#eee" stroke-width=".8"/><rect x="13.800" y="8.500" width="2.500" height="7" rx="1" fill="#eee"/></svg>
    <div class="col" style="margin-left:21px"><fit-text w="30">ENG</fit-text><fit-text w="16">IN</fit-text></div>
    <svg width="20" height="17" style="margin-left:22px"><g fill="none" stroke="#222" stroke-width="1.500"><path d="M1 6.500A13 13 0 0 1 19 6.500"/><path d="M3.700 9.500A9 9 0 0 1 16.300 9.500"/><path d="M6.300 12.300A5.300 5.300 0 0 1 13.700 12.300"/></g><circle cx="10" cy="14.500" r="1.800" fill="#222"/></svg>
    <svg width="20" height="16" style="margin-left:10px"><path d="M1 5.500H4L9 1.500V14.500L4 10.500H1Z" fill="none" stroke="#222" stroke-width="1.400"/><path d="M12.500 5L18.500 11M18.500 5L12.500 11" stroke="#222" stroke-width="1.400"/></svg>
    <svg width="21" height="18" style="margin-left:10px"><path d="M10 4.500H16Q17.500 4.500 17.500 6V13.500Q17.500 15 16 15H5.500" fill="none" stroke="#222" stroke-width="1.500"/><path d="M19 8v3.500" stroke="#222" stroke-width="2"/><path d="M6.500 .5C10 5 9 10 5 11.500L1.500 16C0 9 1 4 6.500 .5Z" fill="#222"/></svg>
    <div class="col e" style="margin-left:19px;margin-top:-1px"><fit-text w="36.500">15:17</fit-text><fit-text w="78">09-12-2023</fit-text></div>
    <div class="n"><fit-text w="13">12</fit-text></div>`}
});

def('lv-desktop',class extends Base{
  render(){return `<style>:host{display:flex;flex-direction:column;width:1920px;height:1080px;overflow:hidden;background:linear-gradient(90deg,#8b949f 0 345px,#0c2f7c 345px 600px,#081848 650px 900px,#0a55b8 960px,#123a80 1000px,#04103a 1110px 1500px,#8b949f 1512px)}
    .w{display:flex;height:1020.500px;flex:none}.s{width:1px;height:1018.500px;flex:none;background:#6c93b5}.s2{background:linear-gradient(#8fb8d4 0 150px,#19a0e0 160px,#0b48c8 300px 390px,#2aa0e0 400px,#0b48c8 600px,#0a2a90)}</style>
    <div class="w"><div class="s"></div><lv-window name="LABVIEW PROJECT.vi" tw="138" style="--panel:#e1e1e1"><project-panel></project-panel></lv-window>
    <div class="s s2"></div><lv-window idle name="NI_MAPro.lvlib:Waveform Peak Detection for N Chan.vi:7220001 (clone)" tw="471" style="--panel:#b2b2b2"><peak-panel></peak-panel></lv-window></div>
    <task-bar></task-bar>`}
});
</script>
</body>
</html>
